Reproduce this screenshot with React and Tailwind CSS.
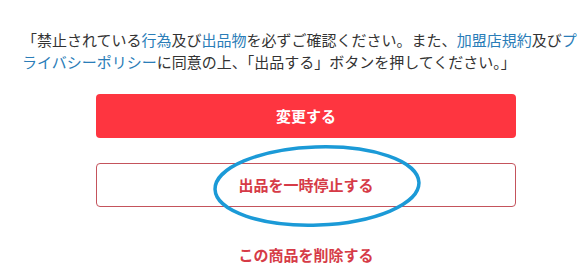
export default function App() {
  return (
    <div className="w-[588px] h-[279px] overflow-hidden bg-white font-['Noto_Sans_CJK_JP',sans-serif]">
      <div className="w-[568px] ml-[22px] pt-[29px]">
        <p className="text-[15px] leading-[22px] text-[#333]">
          「禁止されている<span className="text-[#2a7db8]">行為</span>及び<span className="text-[#2a7db8]">出品物</span>を必ずご確認ください。また、<span className="text-[#2a7db8]">加盟店規約</span>及び<span className="text-[#2a7db8]">プライバシーポリシー</span>に同意の上、「出品する」ボタンを押してください。」
        </p>

        <div className="flex flex-col items-center mt-[21px]">
          <button className="w-[420px] h-[44px] rounded bg-[#fe3540] text-white text-[15px] font-bold">
            変更する
          </button>

          <div className="relative mt-[25px]">
            <button className="w-[420px] h-[44px] rounded border border-[#c4535c] bg-white text-[#d63b47] text-[15px] font-bold">
              出品を一時停止する
            </button>
            {/* hand-drawn highlight */}
            <svg className="absolute left-[113px] top-[-22px] pointer-events-none" width="216" height="90" viewBox="0 0 216 90">
              <ellipse cx="108" cy="45" rx="102" ry="39" fill="none" stroke="#1b9ad7" strokeWidth="3.5" transform="rotate(-2 108 45)" />
            </svg>
          </div>

          <button className="mt-[37px] text-[#d63b47] text-[15px] leading-[22px] font-bold">
            この商品を削除する
          </button>
        </div>
      </div>
    </div>
  );
}
